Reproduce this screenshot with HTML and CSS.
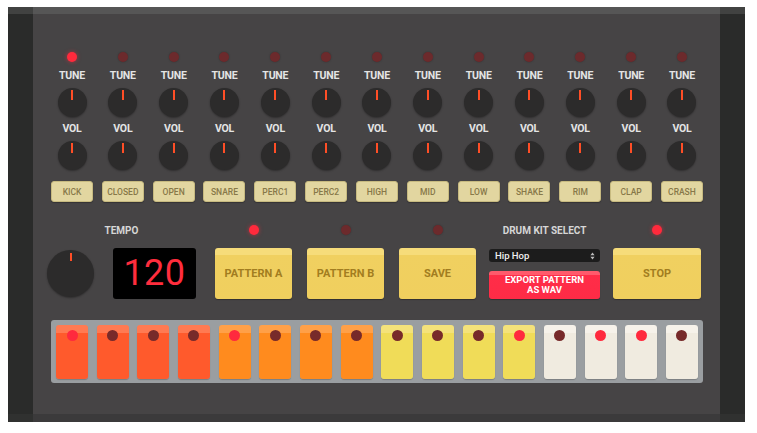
FILE: index.html
```html
<!DOCTYPE html>
<html>
<head>
<meta charset="utf-8">
<link rel="stylesheet" href="styles.css">
</head>
<body>
<div class="machine">
  <div class="side"></div>
  <div class="main">
    <div class="channels">
      <div class="ch"><span class="led on"></span><span class="lbl">TUNE</span><div class="knob"><i></i></div><span class="lbl">VOL</span><div class="knob"><i></i></div><button class="pad">KICK</button></div>
      <div class="ch"><span class="led"></span><span class="lbl">TUNE</span><div class="knob"><i></i></div><span class="lbl">VOL</span><div class="knob"><i></i></div><button class="pad">CLOSED</button></div>
      <div class="ch"><span class="led"></span><span class="lbl">TUNE</span><div class="knob"><i></i></div><span class="lbl">VOL</span><div class="knob"><i></i></div><button class="pad">OPEN</button></div>
      <div class="ch"><span class="led"></span><span class="lbl">TUNE</span><div class="knob"><i></i></div><span class="lbl">VOL</span><div class="knob"><i></i></div><button class="pad">SNARE</button></div>
      <div class="ch"><span class="led"></span><span class="lbl">TUNE</span><div class="knob"><i></i></div><span class="lbl">VOL</span><div class="knob"><i></i></div><button class="pad">PERC1</button></div>
      <div class="ch"><span class="led"></span><span class="lbl">TUNE</span><div class="knob"><i></i></div><span class="lbl">VOL</span><div class="knob"><i></i></div><button class="pad">PERC2</button></div>
      <div class="ch"><span class="led"></span><span class="lbl">TUNE</span><div class="knob"><i></i></div><span class="lbl">VOL</span><div class="knob"><i></i></div><button class="pad">HIGH</button></div>
      <div class="ch"><span class="led"></span><span class="lbl">TUNE</span><div class="knob"><i></i></div><span class="lbl">VOL</span><div class="knob"><i></i></div><button class="pad">MID</button></div>
      <div class="ch"><span class="led"></span><span class="lbl">TUNE</span><div class="knob"><i></i></div><span class="lbl">VOL</span><div class="knob"><i></i></div><button class="pad">LOW</button></div>
      <div class="ch"><span class="led"></span><span class="lbl">TUNE</span><div class="knob"><i></i></div><span class="lbl">VOL</span><div class="knob"><i></i></div><button class="pad">SHAKE</button></div>
      <div class="ch"><span class="led"></span><span class="lbl">TUNE</span><div class="knob"><i></i></div><span class="lbl">VOL</span><div class="knob"><i></i></div><button class="pad">RIM</button></div>
      <div class="ch"><span class="led"></span><span class="lbl">TUNE</span><div class="knob"><i></i></div><span class="lbl">VOL</span><div class="knob"><i></i></div><button class="pad">CLAP</button></div>
      <div class="ch"><span class="led"></span><span class="lbl">TUNE</span><div class="knob"><i></i></div><span class="lbl">VOL</span><div class="knob"><i></i></div><button class="pad">CRASH</button></div>
    </div>

    <div class="controls">
      <div class="group tempo">
        <div class="head"><span class="lbl-h">TEMPO</span></div>
        <div class="body">
          <div class="bigknob"><i></i></div>
          <div class="display">120</div>
        </div>
      </div>
      <div class="group g-pa">
        <div class="head"><span class="led on"></span></div>
        <div class="body"><button class="ybtn">PATTERN A</button></div>
      </div>
      <div class="group g-pb">
        <div class="head"><span class="led"></span></div>
        <div class="body"><button class="ybtn">PATTERN B</button></div>
      </div>
      <div class="group g-save">
        <div class="head"><span class="led"></span></div>
        <div class="body"><button class="ybtn">SAVE</button></div>
      </div>
      <div class="group g-kit">
        <div class="head"><span class="lbl-h">DRUM KIT SELECT</span></div>
        <div class="body kitbody">
          <div class="select"><span>Hip Hop</span><svg width="5" height="8" viewBox="0 0 5 8"><path d="M2.5 0.5 L4.6 3.2 H0.4 Z M2.5 7.5 L0.4 4.8 H4.6 Z" fill="#bbb"/></svg></div>
          <button class="export">EXPORT PATTERN<br>AS WAV</button>
        </div>
      </div>
      <div class="group g-stop">
        <div class="head"><span class="led on"></span></div>
        <div class="body"><button class="ybtn stop">STOP</button></div>
      </div>
    </div>

    <div class="seq">
      <div class="step c1"><span class="sled on"></span></div>
      <div class="step c1"><span class="sled"></span></div>
      <div class="step c1"><span class="sled"></span></div>
      <div class="step c1"><span class="sled"></span></div>
      <div class="step c2"><span class="sled on"></span></div>
      <div class="step c2"><span class="sled"></span></div>
      <div class="step c2"><span class="sled"></span></div>
      <div class="step c2"><span class="sled"></span></div>
      <div class="step c3"><span class="sled"></span></div>
      <div class="step c3"><span class="sled"></span></div>
      <div class="step c3"><span class="sled"></span></div>
      <div class="step c3"><span class="sled on"></span></div>
      <div class="step c4"><span class="sled"></span></div>
      <div class="step c4"><span class="sled on"></span></div>
      <div class="step c4"><span class="sled on"></span></div>
      <div class="step c4"><span class="sled"></span></div>
    </div>
  </div>
  <div class="side"></div>
</div>
</body>
</html>
```

FILE: styles.css
```css
* { box-sizing: border-box; }
html, body { background: #ffffff; }
body {
  margin: 7px 0 0 8px;
  font-family: Roboto, "Liberation Sans", Arial, sans-serif;
}
.machine {
  display: flex;
  width: 737px;
  height: 415px;
}
.side {
  width: 25px;
  background: #2a2b2a;
  border-top: 7px solid #414241;
  border-bottom: 8px solid #303130;
}
.main {
  flex: 1;
  background: #464445;
  border-top: 7px solid #565656;
  border-bottom: 8px solid #3b3a3b;
  padding: 38px 17px 0 14px;
  display: flex;
  flex-direction: column;
}
.channels {
  display: flex;
  justify-content: space-between;
  margin-left: 4px;
}
.ch {
  width: 42px;
  display: flex;
  flex-direction: column;
  align-items: center;
}
.led {
  display: block;
  width: 10px;
  height: 10px;
  border-radius: 50%;
  background: #6c2a2c;
  box-shadow: 0 0 2px rgba(0,0,0,0.3);
}
.led.on {
  background: #ff2a3c;
  box-shadow: 0 0 4px rgba(255,40,60,0.6);
}
.ch .led { margin-bottom: 2px; }
.lbl {
  margin-top: 6px;
  height: 12px;
  line-height: 12px;
  font-size: 10.5px;
  font-weight: 700;
  color: #e4e4e4;
  letter-spacing: -0.2px;
}
.knob {
  position: relative;
  width: 29px;
  height: 29px;
  margin-top: 6px;
  border-radius: 50%;
  background: #2c2b2b;
  box-shadow: 0 1px 2px rgba(0,0,0,0.35);
}
.knob i {
  position: absolute;
  left: 13.5px;
  top: 2px;
  width: 2px;
  height: 10px;
  background: #ff4e26;
}
.pad {
  margin-top: 11px;
  width: 42px;
  height: 21px;
  padding: 0;
  border: 1px solid #c7ba80;
  border-radius: 3px;
  background: #e2d6a0;
  color: #877849;
  font-family: Roboto, "Liberation Sans", Arial, sans-serif;
  font-size: 8.5px;
  font-weight: 500;
  box-shadow: 0 1px 1px rgba(0,0,0,0.25);
}

.controls {
  display: flex;
  align-items: flex-start;
  margin-top: 19px;
}
.group {
  display: flex;
  flex-direction: column;
  align-items: center;
}
.head {
  height: 18px;
  margin-bottom: 9px;
  display: flex;
  align-items: center;
  justify-content: center;
}
.lbl-h {
  font-size: 10px;
  font-weight: 700;
  color: #d6d6d6;
}
.body {
  height: 51px;
  display: flex;
  align-items: center;
}
.tempo .body { gap: 19px; }
.bigknob {
  position: relative;
  width: 47px;
  height: 47px;
  border-radius: 50%;
  background: #2c2b2b;
  box-shadow: 0 1px 2px rgba(0,0,0,0.35);
}
.bigknob i {
  position: absolute;
  left: 22.5px;
  top: 3px;
  width: 2px;
  height: 8px;
  background: #ff4e26;
}
.display {
  width: 83px;
  height: 51px;
  background: #000;
  border-radius: 3px;
  color: #ff2d3d;
  font-size: 36px;
  line-height: 51px;
  text-align: center;
  letter-spacing: 0.5px;
}
.g-pa { margin-left: 19px; }
.g-pb { margin-left: 15px; }
.g-save { margin-left: 15px; }
.g-kit { margin-left: 13px; }
.g-stop { margin-left: 13px; }
.ybtn {
  width: 77px;
  height: 51px;
  padding: 0;
  border: none;
  border-radius: 3px;
  background: linear-gradient(#f6dc7a 0, #f6dc7a 7px, #f0d060 7px, #f0cf5e 100%);
  box-shadow: 0 1px 1px rgba(0,0,0,0.3);
  color: #a27d20;
  font-family: Roboto, "Liberation Sans", Arial, sans-serif;
  font-size: 11px;
  font-weight: 700;
}
.ybtn.stop { width: 88px; }
.kitbody {
  flex-direction: column;
  align-items: stretch;
  justify-content: space-between;
  width: 111px;
  padding-top: 1px;
}
.select {
  height: 13px;
  background: #1c1c1c;
  border-radius: 3px;
  display: flex;
  align-items: center;
  justify-content: space-between;
  padding: 0 5px 0 6px;
  color: #f0f0f0;
  font-size: 9.5px;
  font-weight: 500;
}
.export {
  height: 28px;
  padding: 0;
  border: none;
  border-radius: 3px;
  background: linear-gradient(#ff5a6c 0, #ff5a6c 4px, #ff2d48 4px, #ff2b46 100%);
  box-shadow: 0 1px 1px rgba(0,0,0,0.3);
  color: #fff;
  font-family: Roboto, "Liberation Sans", Arial, sans-serif;
  font-size: 9.5px;
  font-weight: 700;
  line-height: 10px;
}

.seq {
  margin-top: 21px;
  margin-left: 4px;
  height: 63px;
  background: #9a9ea1;
  border-radius: 3px;
  padding: 5px 5px 4px 5px;
  display: flex;
  justify-content: space-between;
}
.step {
  width: 32px;
  height: 54px;
  border-radius: 3px;
  display: flex;
  flex-direction: column;
  align-items: center;
  padding-top: 5px;
  box-shadow: 0 1px 1px rgba(0,0,0,0.2);
}
.c1 { background: linear-gradient(#ff7a52 0, #ff7a52 8px, #ff5a2c 8px); }
.c2 { background: linear-gradient(#ffa048 0, #ffa048 8px, #ff8b1e 8px); }
.c3 { background: linear-gradient(#f4e27a 0, #f4e27a 8px, #f0dc58 8px); }
.c4 { background: linear-gradient(#f6f2ea 0, #f6f2ea 8px, #f0ebe0 8px); }
.sled {
  display: block;
  width: 11px;
  height: 11px;
  border-radius: 50%;
  background: #772a2a;
}
.sled.on { background: #ff2a3e; }
```
